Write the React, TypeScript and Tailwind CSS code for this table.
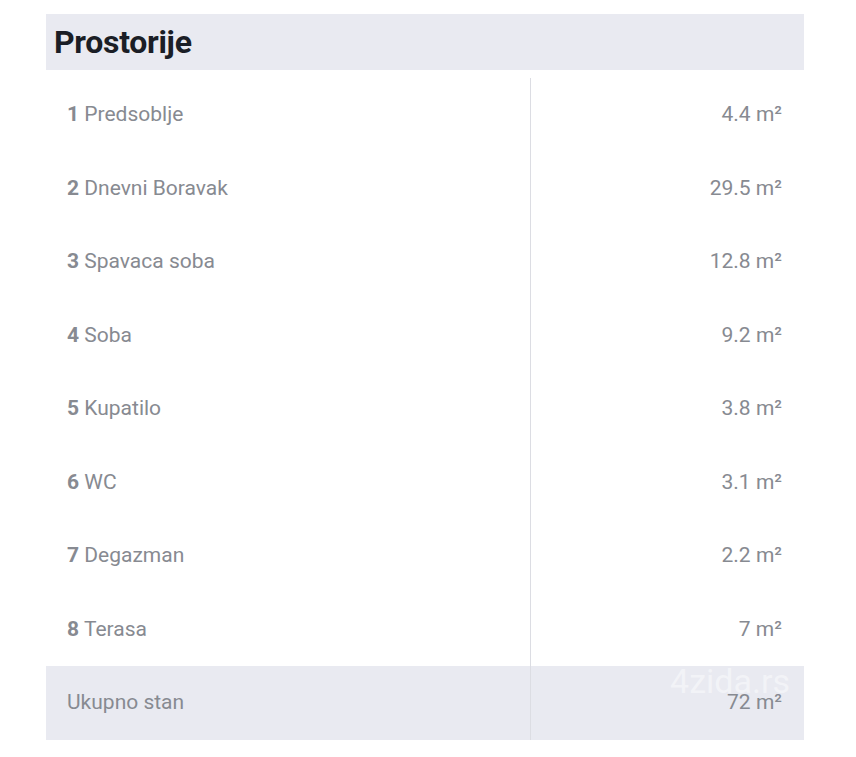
const rooms = [
  { n: 1, name: "Predsoblje", area: "4.4" },
  { n: 2, name: "Dnevni Boravak", area: "29.5" },
  { n: 3, name: "Spavaca soba", area: "12.8" },
  { n: 4, name: "Soba", area: "9.2" },
  { n: 5, name: "Kupatilo", area: "3.8" },
  { n: 6, name: "WC", area: "3.1" },
  { n: 7, name: "Degazman", area: "2.2" },
  { n: 8, name: "Terasa", area: "7" },
];

export default function App() {
  return (
    <div className="min-h-[757px] bg-white pt-[14px] px-[46px] font-['Roboto',sans-serif]">
      <div className="w-[758px]">
        <div className="h-[56px] bg-[#e9eaf1] px-[8px] flex items-center">
          <h2 className="text-[32px] font-bold text-[#1b1e26] tracking-[-0.3px]">Prostorije</h2>
        </div>
        <div className="mt-[8px] text-[21px] text-[#878a91]">
          {rooms.map((r) => (
            <Row
              key={r.n}
              label={
                <span>
                  <span className="font-bold">{r.n}</span> {r.name}
                </span>
              }
              value={`${r.area} m²`}
            />
          ))}
          <div className="relative">
            <Row label="Ukupno stan" value="72 m²" total />
            <span className="absolute right-[14px] top-[-2px] text-[34px] leading-none text-white/45 pointer-events-none">
              4zida.rs
            </span>
          </div>
        </div>
      </div>
    </div>
  );
}

function Row({ label, value, total }: { label: React.ReactNode; value: string; total?: boolean }) {
  return (
    <div className={`grid grid-cols-[485px_1fr] h-[73.5px] ${total ? "bg-[#e9eaf1]" : ""}`}>
      <div className="flex items-center pl-[21px] border-r border-[#dcdde3]">{label}</div>
      <div className="flex items-center justify-end pr-[22px] relative z-10">{value}</div>
    </div>
  );
}
